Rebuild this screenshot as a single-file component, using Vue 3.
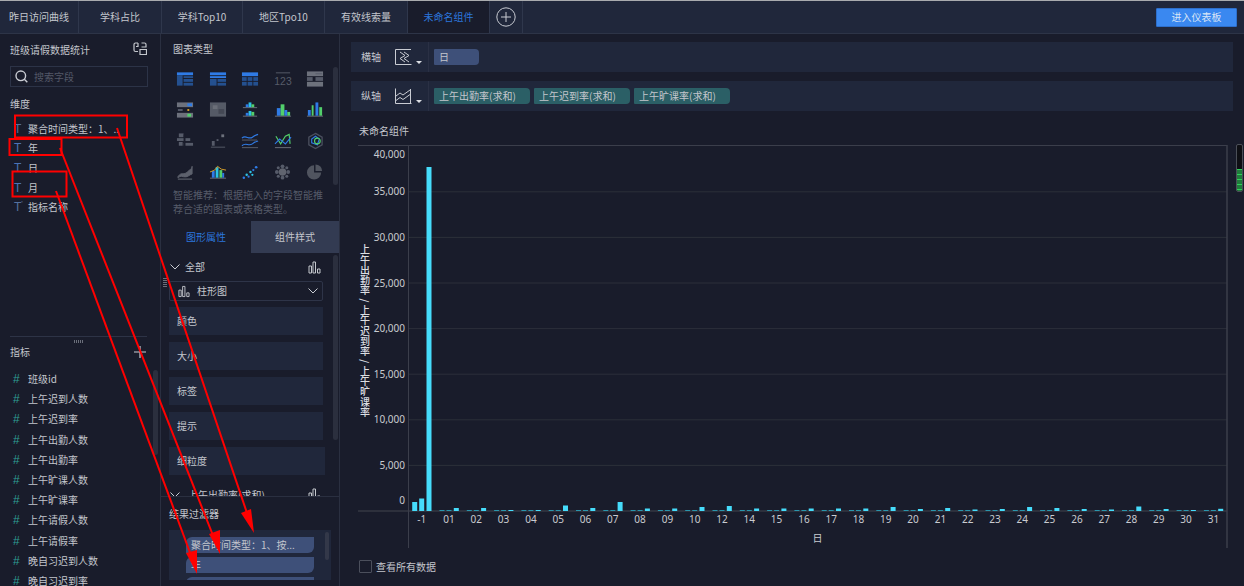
<script setup>
const tabs = ['昨日访问曲线', '学科占比', '学科Top10', '地区Tpo10', '有效线索量', '未命名组件']
const tabWidths = [79, 83, 81, 82, 83, 82]
const dims = ['聚合时间类型：1、..', '年', '日', '月', '指标名称']
const measures = ['班级id', '上午迟到人数', '上午迟到率', '上午出勤人数', '上午出勤率', '上午旷课人数', '上午旷课率', '上午请假人数', '上午请假率', '晚自习迟到人数', '晚自习迟到率']
const props = ['颜色', '大小', '标签', '提示', '细粒度']

const B = '#2f7be6', D = '#24508f', G = '#565b69', L = '#6d717c', N = '#52cf6b', C = '#2cc3e4', Y = '#d8a12a'
const r = (x, y, w, h, f) => ({ x, y, w, h, f })
const p = (d, s, w = 1.2) => ({ d, s, w })
const icons = [
  { R: [r(1, 2, 17, 3, B), r(1, 5, 6, 11, D), r(8, 6, 10, 2, D), r(8, 9, 10, 3, D), r(8, 13, 10, 3, D)] },
  { R: [r(1, 2, 17, 3, B), r(1, 6, 17, 2, B), r(1, 9, 7, 7, D), r(9, 9, 9, 3, D), r(9, 13, 9, 3, D)] },
  { R: [r(1, 2, 17, 4, B), r(1, 7, 5, 4, D), r(7, 7, 5, 4, D), r(13, 7, 5, 4, D), r(1, 12, 5, 4, D), r(7, 12, 5, 4, D), r(13, 12, 5, 4, D)] },
  { R: [r(2, 2, 15, 1, G)], T: '123' },
  { R: [r(1, 1, 17, 5, L), r(1, 7, 6, 4, G), r(10, 7, 8, 4, G), r(1, 12, 17, 5, L), r(10, 3, 7, 1, G)] },
  { R: [r(1, 1, 17, 5, L), r(12, 2, 5, 3, B), r(2, 8, 5, 2, G), r(12, 8, 2, 2, Y), r(1, 12, 17, 5, L), r(12, 13, 4, 3, N)] },
  { R: [r(1, 1, 17, 15, '#555a66'), r(4, 4, 5, 4, '#6a6e78'), r(10, 8, 6, 5, '#444854')] },
  { R: [r(2, 6, 15, 1, L), r(2, 15, 15, 1, L), r(8, 1, 3, 5, C), r(5, 3, 3, 3, B), r(11, 3, 3, 3, N), r(8, 10, 3, 5, C), r(5, 12, 3, 3, B), r(11, 11, 3, 4, N)] },
  { R: [r(1, 15, 17, 1, L), r(3, 7, 4, 8, B), r(7, 3, 4, 12, N), r(11, 9, 3, 6, B), r(14, 11, 3, 4, N)] },
  { R: [r(1, 15, 17, 1, L), r(2, 9, 3, 6, B), r(6, 4, 2, 11, N), r(10, 1, 3, 14, B), r(14, 6, 3, 9, N)] },
  { R: [r(3, 1, 5, 4, G), r(1, 6, 14, 3, G), r(3, 10, 4, 4, G), r(8, 11, 10, 3, G), r(8, 2, 2, 14, '#1a1d2c')] },
  { R: [r(2, 15, 15, 1, G), r(3, 9, 3, 5, G), r(8, 7, 2, 2, G), r(13, 2, 3, 3, L)] },
  { P: [p('M1 6 C5 2 8 8 12 5 S16 3 18 2', B), p('M1 14 C5 10 8 15 12 12 S16 10 18 9', B), p('M1 8h16', L, .8), p('M1 16h17', L, .8)] },
  { P: [p('M2 4 L7 12 L12 4 L16 2 L17 12', N), p('M1 12 L6 7 L12 12 L18 5', B), p('M1 16h17', L, 1)] },
  { P: [p('M10 1 L17 5 V13 L10 17 L3 13 V5 Z', '#4a4f5e', 1.4), p('M10 4 L14 7 L12 13 L6 11 L6 7 Z', B), p('M9 9 a3 3 0 1 0 6 0 a3 3 0 1 0 -6 0', N)] },
  { P: [{ d: 'M2 14 C6 8 8 13 12 9 S16 7 17 3 V11 C14 12 12 15 8 14 S4 14 2 15 Z', s: '#5d616d', w: 1, f: '#5d616d' }, p('M2 16.5h15', L, 1)] },
  { R: [r(1, 15, 17, 1, L), r(3, 8, 3, 7, B), r(7, 4, 3, 11, C), r(11, 7, 3, 8, N), r(14, 10, 2, 5, B)], P: [p('M1 9 L6 7 L9 3 L13 6 L18 7', Y, 1)] },
  { C: [[3, 15, 1.3, B], [6, 12, 1.3, C], [8, 14, 1.2, B], [10, 9, 1.3, C], [13, 7, 1.2, C], [12, 12, 1.2, C], [16, 4, 1.4, B]] },
  { C: [[9, 9, 4, '#60646f'], [3, 9, 2, G], [15, 9, 2, G], [9, 3, 2, G], [9, 15, 2, G], [4.5, 4.5, 1.6, G], [13.5, 4.5, 1.6, G], [4.5, 13.5, 1.6, G], [13.5, 13.5, 1.6, G]] },
  { R: [], P: [{ d: 'M8.500 9.500 V2 A7.500 7.500 0 1 0 16 9.500 Z', s: 'none', w: 0, f: '#50545f' }, { d: 'M10 1 A7 7 0 0 1 17 8 H10 Z', s: 'none', w: 0, f: '#50545f' }] },
]

const cats = ['-1', '01', '02', '03', '04', '05', '06', '07', '08', '09', '10', '12', '14', '15', '16', '17', '18', '19', '20', '21', '22', '23', '24', '25', '26', '27', '28', '29', '30', '31']
const h3 = [344, 3, 3, 1, 1, 5.5, 3, 9, 2.5, 2.5, 4, 5, 2.5, 2.5, 2.5, 2.5, 2.5, 4, 2, 3, 1.5, 2, 4, 3, 2, 1.5, 4.5, 2, 1, 2.2]
const step = 27.3
const cx = (i) => 421.7 + i * step
const base = 511
const ticks = [40000, 35000, 30000, 25000, 20000, 15000, 10000, 5000, 0].map((v) => ({
  y: base - (v / 5000) * 45.6,
  label: v.toLocaleString('en-US'),
}))
const tickLabelY = (y, i) => (i === 0 ? y + 12 : i === 8 ? y - 7 : y + 3.5)
</script>

<template>
  <div class="page">
    <header class="topbar">
      <nav class="tabs">
        <div
          v-for="(t, i) in tabs"
          :key="t"
          class="tab"
          :class="{ active: i === 5 }"
          :style="{ width: tabWidths[i] + 'px' }"
        >{{ t }}</div>
        <div class="tab add">
          <svg width="20" height="20" viewBox="0 0 20 20" fill="none" stroke="#c9ccd3" stroke-width="1">
            <circle cx="10" cy="10" r="9.2" />
            <path d="M10 5v10M5 10h10" />
          </svg>
        </div>
      </nav>
      <button class="enter">进入仪表板</button>
    </header>

    <div class="body">
      <aside class="fields">
        <section class="dims">
          <div class="ds-head">
            <span>班级请假数据统计</span>
            <svg width="14" height="14" viewBox="0 0 14 14" fill="none" stroke="#c4c7cd" stroke-width="1.2">
              <path d="M5 1H2.500A1.500 1.500 0 0 0 1 2.500V8a1.500 1.500 0 0 0 1.500 1.500H5M5 1v3.500H3M8.500 1h3A1.500 1.500 0 0 1 13 2.500V5H8.500M7 7.500h6.500v5H7z" />
            </svg>
          </div>
          <div class="search">
            <svg width="13" height="13" viewBox="0 0 13 13" fill="none" stroke="#c9ccd3" stroke-width="1.4">
              <circle cx="5.8" cy="5.8" r="4.8" />
              <path d="M9.3 9.3l3 3" />
            </svg>
            <span>搜索字段</span>
          </div>
          <div class="sec-label">维度</div>
          <ul class="dim-list">
            <li v-for="(d, i) in dims" :key="d">
              <span class="t-mark" :class="{ muted: i === 0 || i === 4 }">T<sup v-if="i === 4">'</sup></span>
              <span>{{ d }}</span>
            </li>
          </ul>
        </section>
        <section class="measures">
          <div class="grip h"></div>
          <div class="m-head">
            <span>指标</span>
            <svg width="12" height="12" viewBox="0 0 12 12" stroke="#c9ccd3" stroke-width="1.2"><path d="M6 0v12M0 6h12" /></svg>
          </div>
          <ul class="m-list">
            <li v-for="m in measures" :key="m"><span class="hash">#</span><span>{{ m }}</span></li>
          </ul>
          <div class="thumb"></div>
        </section>
      </aside>

      <section class="config">
        <div class="types">
          <div class="cfg-title">图表类型</div>
          <div class="icon-grid">
            <svg v-for="(ic, i) in icons" :key="i" width="18" height="18" viewBox="0 0 19 18">
              <rect v-for="(a, j) in ic.R || []" :key="j" :x="a.x" :y="a.y" :width="a.w" :height="a.h" :fill="a.f" />
              <path v-for="(a, j) in ic.P || []" :key="'p' + j" :d="a.d" :stroke="a.s" :stroke-width="a.w" :fill="a.f || 'none'" />
              <circle v-for="(a, j) in ic.C || []" :key="'c' + j" :cx="a[0]" :cy="a[1]" :r="a[2]" :fill="i === 17 ? (j % 2 ? '#2cc3e4' : '#2f7be6') : a[2] > 3 ? '#60646f' : '#565b69'" />
              <text v-if="ic.T" x="9.5" y="15" text-anchor="middle" class="icon-num">{{ ic.T }}</text>
            </svg>
          </div>
          <p class="tip">智能推荐：根据拖入的字段智能推荐合适的图表或表格类型。</p>
          <div class="thumb t2"></div>
        </div>

        <div class="cfg-tabs">
          <div class="cfg-tab on">图形属性</div>
          <div class="cfg-tab">组件样式</div>
        </div>

        <div class="props">
          <div class="all">
            <svg width="10" height="6" viewBox="0 0 10 6" fill="none" stroke="#c9ccd3" stroke-width="1"><path d="M.5.5L5 5 9.500.5" /></svg>
            <span>全部</span>
            <svg class="bars" width="13" height="13" viewBox="0 0 13 13" fill="none" stroke="#c4c7cd" stroke-width="1"><path d="M1 5h2.500v7H1zM5 1h2.500v11H5zM9.500 8H12v4H9.500z" /></svg>
          </div>
          <div class="select">
            <svg width="12" height="13" viewBox="0 0 13 13" fill="none" stroke="#c4c7cd" stroke-width="1"><path d="M1 5h2.500v7H1zM5 1h2.500v11H5zM9.500 8H12v4H9.500z" /></svg>
            <span>柱形图</span>
            <svg class="chev" width="10" height="6" viewBox="0 0 10 6" fill="none" stroke="#c9ccd3" stroke-width="1"><path d="M.5.5L5 5 9.500.5" /></svg>
          </div>
          <div v-for="(x, i) in props" :key="x" class="prop" :class="{ wide: i === 4 }">{{ x }}</div>
          <div class="all next">
            <svg width="10" height="6" viewBox="0 0 10 6" fill="none" stroke="#c9ccd3" stroke-width="1"><path d="M.5.5L5 5 9.500.5" /></svg>
            <span>上午出勤率(求和)</span>
            <svg class="bars" width="13" height="13" viewBox="0 0 13 13" fill="none" stroke="#c4c7cd" stroke-width="1"><path d="M1 5h2.500v7H1zM5 1h2.500v11H5zM9.500 8H12v4H9.500z" /></svg>
          </div>
          <div class="thumb t3"></div>
        </div>

        <div class="filter">
          <div class="cfg-title f">结果过滤器</div>
          <div class="f-box">
            <div class="f-pill">聚合时间类型：1、按...</div>
            <div class="f-pill">年</div>
            <div class="f-pill">月</div>
            <div class="thumb t4"></div>
          </div>
        </div>
        <div class="grip v"></div>
      </section>

      <main class="main">
        <div class="axis-row">
          <span class="axis-name">横轴</span>
          <div class="axis-ico">
            <svg width="17" height="16" viewBox="0 0 17 16" fill="none" stroke="#c9ccd3" stroke-width="1">
              <path d="M.5.5h15.500M.5.5v15M.5 15.500h16M5 3l5 3.500-5 3 5 3.500M9 3l5 3.500-5 3 5 3.500" />
            </svg>
            <i class="caret"></i>
          </div>
          <div class="pills"><div class="pill dim">日</div></div>
        </div>
        <div class="axis-row">
          <span class="axis-name">纵轴</span>
          <div class="axis-ico">
            <svg width="17" height="16" viewBox="0 0 17 16" fill="none" stroke="#c9ccd3" stroke-width="1">
              <path d="M.5.5v15h16M15.500 1v14M1 8l4-3 3 2 7-5M1 12.500l4-3 3 2 7-5" />
            </svg>
            <i class="caret"></i>
          </div>
          <div class="pills">
            <div class="pill mea">上午出勤率(求和)</div>
            <div class="pill mea">上午迟到率(求和)</div>
            <div class="pill mea">上午旷课率(求和)</div>
          </div>
        </div>
        <div class="chart-title">未命名组件</div>
        <svg class="chart" width="904" height="415" viewBox="340 140 904 415">
          <line x1="358" y1="145.500" x2="1227" y2="145.500" stroke="#3b3e4b" />
          <line v-for="(t, i) in ticks.slice(1, 8)" :key="i" x1="408" :y1="t.y" x2="1227" :y2="t.y" stroke="#2c2f3a" />
          <line x1="358" y1="511" x2="1227" y2="511" stroke="#343743" stroke-width="1.500" />
          <line x1="408.500" y1="145" x2="408.500" y2="548" stroke="#3b3e4b" />
          <line x1="1227" y1="145" x2="1227" y2="548" stroke="#3b3e4b" stroke-width="1.500" />
          <text v-for="(t, i) in ticks" :key="'l' + i" x="405" :y="tickLabelY(t.y, i)" text-anchor="end" class="tick">{{ t.label }}</text>
          <g v-for="(c, i) in cats" :key="c">
            <rect :x="cx(i) - 9.500" :y="base - (i === 0 ? 9 : 1)" width="5" :height="i === 0 ? 9 : 1" :fill="i === 0 ? '#46dcfb' : '#2a96ad'" />
            <rect :x="cx(i) - 2.500" :y="base - (i === 0 ? 12.500 : 1)" width="5" :height="i === 0 ? 12.500 : 1" :fill="i === 0 ? '#46dcfb' : '#2a96ad'" />
            <rect :x="cx(i) + 4.800" :y="base - h3[i]" width="5" :height="h3[i]" fill="#46dcfb" />
            <text :x="cx(i)" y="523" text-anchor="middle" class="tick">{{ c }}</text>
          </g>
          <text x="817.500" y="542" text-anchor="middle" class="tick day">日</text>
          <text x="365" y="331" text-anchor="middle" class="ytitle">上午出勤率 / 上午迟到率 / 上午旷课率</text>
        </svg>
        <label class="all-data"><i class="box"></i><span>查看所有数据</span></label>
        <div class="hbar"></div>
      </main>
    </div>

    <div class="gauge"><div class="level"></div></div>

    <svg class="marks" width="1244" height="586" viewBox="0 0 1244 586" fill="none">
      <g stroke="#f00" stroke-width="2">
        <rect x="15" y="115.500" width="112" height="22" />
        <rect x="9.500" y="139" width="52" height="16" />
        <rect x="12.500" y="171.500" width="54" height="25" />
        <path d="M117 128L248 516" />
        <path d="M60 148L214 538" />
        <path d="M56 191L192 558" />
      </g>
      <g fill="#f00">
        <path d="M254 533L241 513L251 509Z" />
        <path d="M220 554L209 534L220 530Z" />
        <path d="M197 574L186 553L197 550Z" />
      </g>
    </svg>
  </div>
</template>

<style>
html, body { margin: 0; background: #191c2b; }
</style>

<style scoped>
.page {
  position: relative;
  width: 1244px;
  height: 586px;
  overflow: hidden;
  background: #191c2b;
  color: #c3c6cd;
  font: 10px/1.2 "Noto Sans CJK SC", "Noto Sans", sans-serif;
}
.topbar {
  height: 33px;
  box-sizing: border-box;
  border-top: 1px solid #a9abae;
  background: #20273b;
  box-shadow: 0 1px 0 #2d3447;
  display: flex;
  justify-content: space-between;
  align-items: center;
  padding-right: 7px;
}
.tabs { display: flex; height: 100%; }
.tab {
  box-sizing: border-box;
  border-right: 1px solid #2f374c;
  display: flex;
  align-items: center;
  justify-content: center;
  color: #c3c6cd;
}
.tab.active { background: #191c2b; color: #2c76dc; }
.tab.add { width: 33px; }
.enter {
  width: 81px;
  height: 19px;
  margin: 0;
  padding: 0;
  border: 1px solid #2e6fcb;
  border-radius: 1px;
  background: #3a88f0;
  color: #dbe6f7;
  font: inherit;
}
.body { display: flex; height: 553px; margin-top: 1px; }

.fields { width: 161px; box-sizing: border-box; border-right: 1px solid #2a2f40; flex: none; }
.dims { height: 302px; padding: 0 12px 0 10px; box-sizing: border-box; }
.ds-head { height: 32px; display: flex; align-items: center; justify-content: space-between; padding: 0 1px 0 0; margin-top: 0; }
.ds-head svg { margin-bottom: 3px; }
.search {
  height: 21px;
  box-sizing: border-box;
  border: 1px solid #2c3347;
  display: flex;
  align-items: center;
  gap: 6px;
  padding-left: 4px;
  color: #535867;
}
.sec-label { margin-top: 9px; line-height: 15px; }
.dim-list, .m-list { list-style: none; margin: 0; padding: 0; }
.dim-list { margin-top: 8px; }
.dim-list li { height: 19.600px; display: flex; align-items: center; padding-left: 4px; }
.t-mark { width: 14px; color: #4a73b8; font: 12px "Liberation Sans", sans-serif; }
.t-mark.muted { color: #55719f; }
.t-mark sup { font-size: 8px; line-height: 0; }
.measures { position: relative; height: 251px; overflow: hidden; }
.measures::before { content: ""; display: block; height: 1px; margin: 0 13px 0 10px; background: #2d3346; }
.grip.h { width: 10px; height: 3px; margin: 3px 0 0 74px; background: repeating-linear-gradient(90deg, #6a6e7a 0 1px, transparent 1px 2px); }
.m-head { display: flex; justify-content: space-between; align-items: center; padding: 0 14px 0 10px; height: 16px; margin-top: 1px; }
.m-list { margin-top: 9px; }
.m-list li { height: 20.200px; display: flex; align-items: center; padding-left: 13px; }
.hash { width: 15px; color: #2f9d94; font: 12px "Liberation Sans", sans-serif; }
.thumb { position: absolute; width: 5px; background: #2b2f3e; border-radius: 3px; left: 153px; top: 34px; height: 85px; }

.config { position: relative; width: 179px; box-sizing: border-box; border-right: 1px solid #2a2f40; flex: none; display: flex; flex-direction: column; }
.types { position: relative; height: 187px; padding: 0 0 0 12px; box-sizing: border-box; }
.cfg-title { height: 30px; display: flex; align-items: center; }
.icon-grid { display: grid; grid-template-columns: repeat(5, 32.500px); grid-auto-rows: 31px; justify-items: center; align-items: center; margin: -1px 0 1px -4px; }
.icon-num { font: 11px "Liberation Sans Narrow", "Liberation Sans", sans-serif; fill: #565b69; }
.tip { margin: 1px 0 0; width: 150px; line-height: 13.500px; color: #565b69; }
.thumb.t2 { left: 172px; top: 33px; height: 118px; }
.cfg-tabs { display: flex; height: 32px; flex: none; }
.cfg-tab { display: flex; align-items: center; justify-content: center; }
.cfg-tab.on { color: #2c76dc; width: 90px; }
.cfg-tab:not(.on) { flex: 1; background: #333b52; }
.props { position: relative; height: 243px; flex: none; overflow: hidden; padding: 0 16px 0 8px; }
.all { height: 28px; display: flex; align-items: center; gap: 5px; padding: 0 2px 0 1px; }
.all .bars { margin-left: auto; }
.select { height: 20px; box-sizing: border-box; border: 1px solid #2e3448; border-radius: 2px; display: flex; align-items: center; gap: 7px; padding: 0 4px 0 8px; }
.select .chev { margin-left: auto; }
.prop { height: 27.500px; margin-top: 7.500px; background: #20273b; display: flex; align-items: center; padding-left: 8px; }
.select + .prop { margin-top: 6px; }
.prop.wide { margin-right: -2px; }
.all.next { margin-top: 6px; }
.all.next span { margin-left: 3px; }
.thumb.t3 { left: 172px; top: 2px; height: 185px; }
.filter { flex: 1; box-sizing: border-box; border-top: 1px solid #2a2f40; padding: 0 8px; }
.cfg-title.f { height: 33px; }
.f-box { position: relative; width: 162px; height: 50px; background: #20273b; padding: 7px 0 0 17px; box-sizing: border-box; overflow: hidden; }
.f-pill { width: 128px; height: 16px; margin-bottom: 4px; box-sizing: border-box; padding-left: 5px; line-height: 16px; background: #3e5079; border-radius: 6px 0 6px 0; }
.thumb.t4 { left: 156px; top: 2px; width: 4px; height: 28px; background: #333849; }
.grip.v { position: absolute; left: 2px; top: 243px; width: 4px; height: 10px; background: repeating-linear-gradient(0deg, #6a6e7a 0 1px, transparent 1px 2px); }

.main { position: relative; flex: 1; padding: 8px 11px 0; }
.axis-row { height: 30px; background: #20273b; display: flex; align-items: center; margin-bottom: 9px; }
.axis-name { width: 44px; padding-left: 10px; box-sizing: border-box; }
.axis-ico { position: relative; width: 34px; height: 100%; display: flex; align-items: center; border-right: 1px solid #2a3044; box-sizing: border-box; }
.caret { position: absolute; left: 21px; top: 19px; border: 3px solid transparent; border-top-color: #dcdfe4; border-bottom: 0; }
.pills { display: flex; gap: 4px; padding-left: 5px; }
.pill { width: 96px; height: 16px; line-height: 16px; box-sizing: border-box; padding-left: 5px; border-radius: 1px 4px 4px 1px; white-space: nowrap; }
.pill.dim { width: 45px; background: #3e5079; }
.pill.mea { background: #2b5f66; }
.chart-title { margin: 12px 0 0 8px; height: 15px; line-height: 15px; }
.chart { display: block; margin: 2px -11px 0 -11px; }
.tick { font: 10px "Noto Sans", sans-serif; fill: #c9cbd0; }
.tick.day { font: 10px "Noto Sans CJK SC", sans-serif; }
.ytitle { font: 500 10px "Noto Sans CJK SC", sans-serif; fill: #dcdee2; writing-mode: vertical-rl; letter-spacing: .3px; }
.all-data { display: flex; align-items: center; gap: 4px; margin: 5px 0 0 8px; height: 13px; }
.box { width: 13px; height: 13px; box-sizing: border-box; border: 1px solid #4b4f5c; border-radius: 1px; }
.hbar { position: absolute; left: 98px; bottom: 0; width: 71px; height: 1px; background: #3a3d49; }

.gauge { position: absolute; left: 1236px; top: 144px; width: 7px; height: 48px; box-sizing: border-box; border: 1px solid #4b4f58; border-radius: 2px; background: #0e0f14; overflow: hidden; }
.level { margin-top: 24px; height: 22px; background: repeating-linear-gradient(180deg, #2fd15a 0 1px, #217a3c 1px 5px); }
.marks { position: absolute; left: 0; top: 0; pointer-events: none; }
</style>
